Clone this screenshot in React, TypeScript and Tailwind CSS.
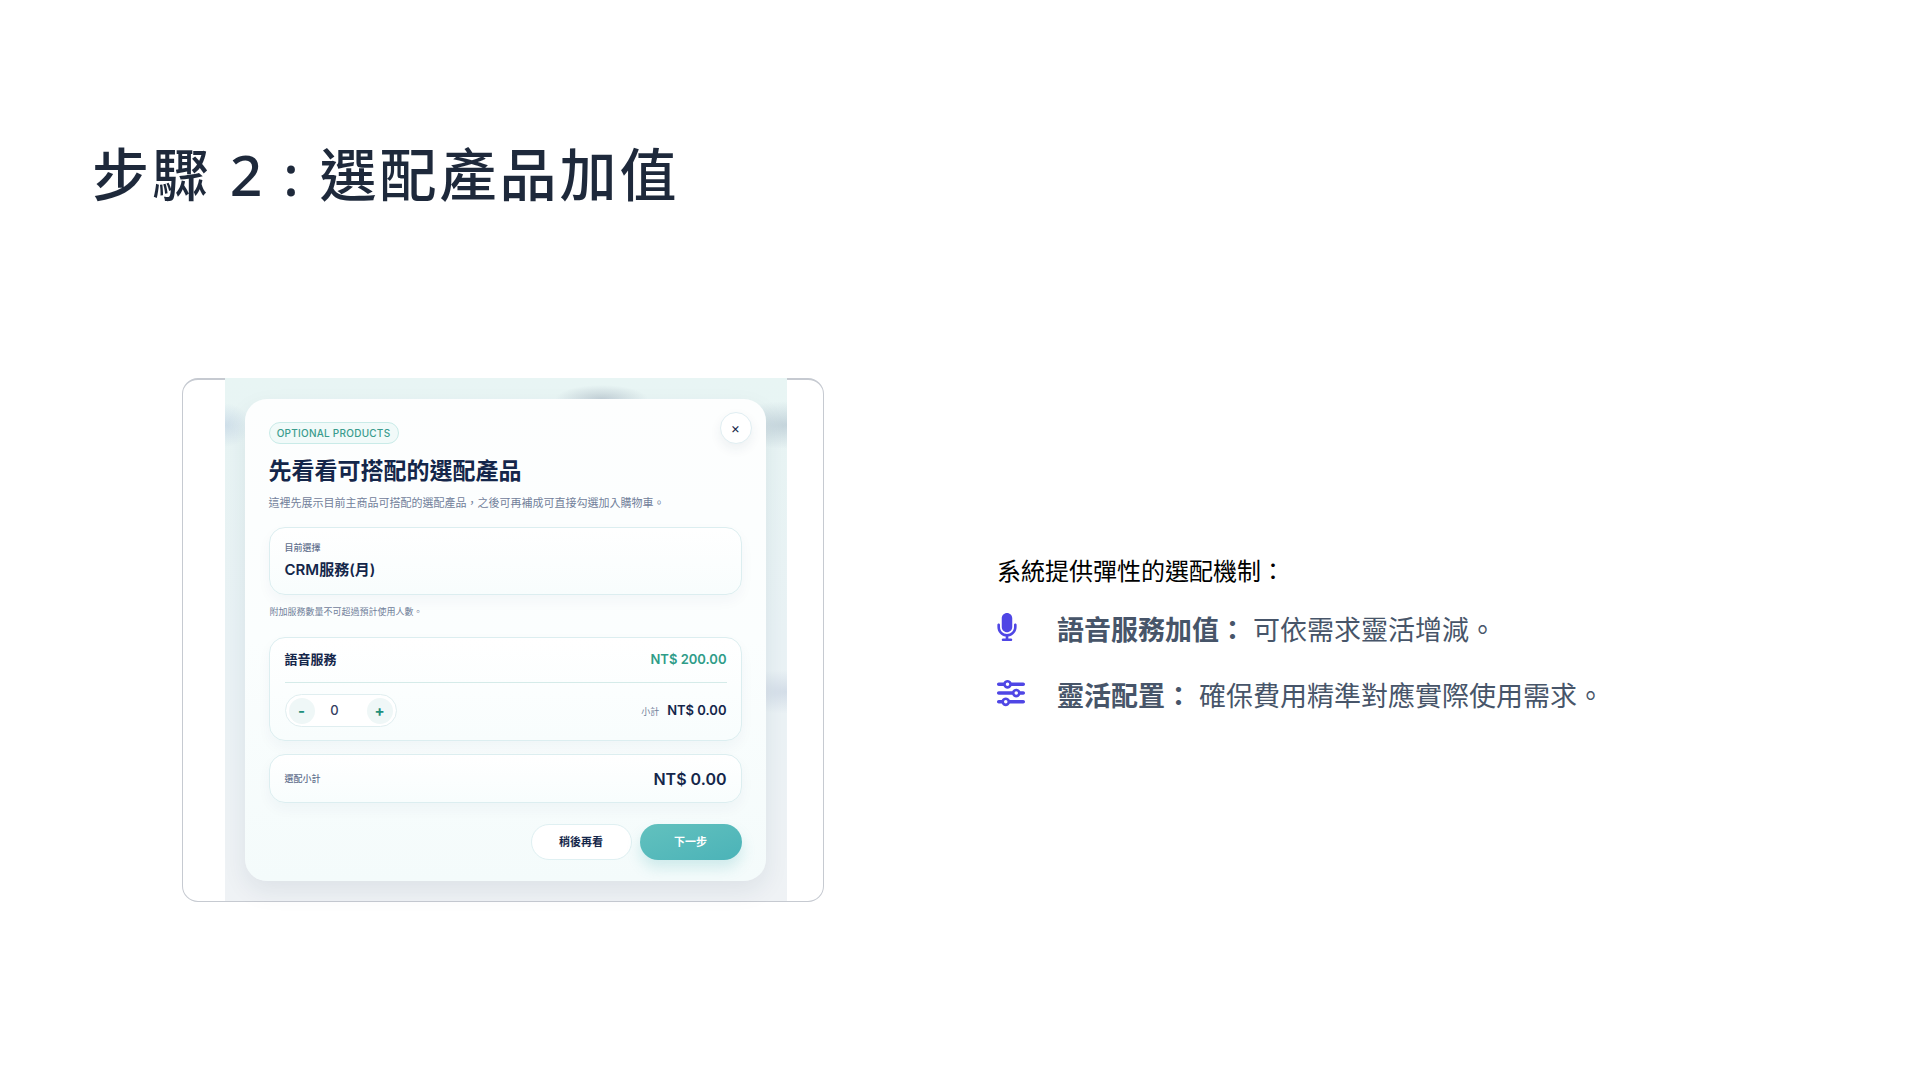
import { useState } from "react";
import type { ReactNode } from "react";
import { FaMicrophone, FaSliders } from "react-icons/fa6";

const sans = "font-['Noto_Sans','Noto_Sans_CJK_TC',sans-serif]";
const ui = "font-['Inter','Noto_Sans_CJK_TC',sans-serif]";

function Card({ className, children }: { className: string; children: ReactNode }) {
  return (
    <section
      className={`rounded-2xl border border-[#dceef0] bg-linear-to-b from-white to-[#f8fdfd] pr-[14px] pl-[15px] shadow-[0_6px_14px_rgba(30,60,90,0.04)] ${className}`}
    >
      {children}
    </section>
  );
}

function Stepper({ value, onChange }: { value: number; onChange: (n: number) => void }) {
  const round = "size-[26px] rounded-full bg-[#eff7f7] text-[15px] leading-[26px] font-bold text-[#1f8f7c]";
  return (
    <div className="flex h-[33px] w-[112px] items-center justify-between rounded-full border border-[#e0eef0] bg-white px-[3px]">
      <button type="button" aria-label="減少" className={round} onClick={() => onChange(Math.max(0, value - 1))}>
        -
      </button>
      <output className="pr-3 text-[13px] font-medium text-[#34405f]">{value}</output>
      <button type="button" aria-label="增加" className={round} onClick={() => onChange(value + 1)}>
        +
      </button>
    </div>
  );
}

function OptionsDialog() {
  const [qty, setQty] = useState(0);
  const subtotal = `NT$ ${(qty * 200).toFixed(2)}`;

  return (
    <div
      className={`${ui} relative rounded-[22px] bg-linear-to-b from-[#fdfefe] via-[#fbfefe] to-[#f4fbfb] px-6 pt-[23px] pb-[21px] text-[#14264a] shadow-[0_10px_24px_rgba(30,50,80,0.08)]`}
    >
      <button
        type="button"
        aria-label="關閉"
        className="absolute top-[13px] right-[14px] size-8 rounded-full border border-[#e0eef2] bg-white text-[14px] leading-[30px] font-normal shadow-[0_5px_12px_rgba(30,50,80,0.07)]"
      >
        ×
      </button>

      <span className="flex h-[22px] w-[130px] items-center justify-center rounded-full border border-[#c9ebe8] bg-[#f1faf9] text-[10px] font-medium tracking-wide text-[#3a9c8d]">
        OPTIONAL PRODUCTS
      </span>
      <h2 className="mt-[10px] text-[23px] leading-[34px] font-bold">先看看可搭配的選配產品</h2>
      <p className="mt-[7px] text-[11px] leading-4 text-[#71809a]">
        這裡先展示目前主商品可搭配的選配產品，之後可再補成可直接勾選加入購物車。
      </p>

      <Card className="mt-4 pt-3 pb-3">
        <p className="text-[9px] leading-[15px] font-medium text-[#5f6f8c]">目前選擇</p>
        <p className="mt-[3px] text-[15px] leading-6 font-semibold">CRM服務(月)</p>
      </Card>
      <p className="mt-[9px] pl-px text-[9px] leading-[15px] text-[#71809a]">附加服務數量不可超過預計使用人數。</p>

      <Card className="mt-[18px] pb-[13px]">
        <div className="flex h-[45px] items-center justify-between border-b border-[#d5ebe9]">
          <h3 className="text-[13px] font-bold">語音服務</h3>
          <span className="text-[13px] font-semibold text-[#2f9c88]">NT$ 200.00</span>
        </div>
        <div className="mt-[11px] flex items-center justify-between">
          <Stepper value={qty} onChange={setQty} />
          <p className="flex items-baseline gap-2">
            <span className="text-[9px] text-[#71809a]">小計</span>
            <span className="text-[13px] font-semibold">{subtotal}</span>
          </p>
        </div>
      </Card>

      <Card className="mt-[13px] flex h-[49px] items-center justify-between">
        <span className="text-[9px] font-medium text-[#5f6f8c]">選配小計</span>
        <span className="text-[16px] font-semibold">{subtotal}</span>
      </Card>

      <div className="mt-[21px] flex justify-end gap-2">
        <button type="button" className="h-9 w-[101px] rounded-full border border-[#dff0f2] bg-white text-[11px] font-bold">
          稍後再看
        </button>
        <button
          type="button"
          className="h-9 w-[102px] rounded-full bg-linear-to-br from-[#62c1be] to-[#4bb3b8] text-[11px] font-bold text-white shadow-[0_8px_14px_rgba(75,179,184,0.22)]"
        >
          下一步
        </button>
      </div>
    </div>
  );
}

function Feature({ icon, title, children }: { icon: ReactNode; title: string; children: ReactNode }) {
  return (
    <li className="flex items-start text-[27px] leading-[42px] text-[#475569]">
      <span className="w-[60px] shrink-0 pt-1 text-[28px] text-[#4f46e5]">{icon}</span>
      <p>
        <strong className="font-bold">{title}</strong> {children}
      </p>
    </li>
  );
}

// soft shapes of the shop page that show through behind the dialog
const backdrop =
  "bg-[radial-gradient(46px_14px_at_67%_4%,rgba(150,165,180,0.45),transparent),radial-gradient(60px_24px_at_100%_9%,rgba(160,180,195,0.5),transparent),radial-gradient(26px_22px_at_0%_9%,rgba(180,200,222,0.5),transparent),radial-gradient(60px_22px_at_100%_60%,rgba(190,202,220,0.5),transparent),linear-gradient(to_bottom,#e8f5f4,#e9f2f5_50%,#eff2f5)]";

export default function App() {
  return (
    <main className={`${sans} min-h-screen bg-white px-[92px] pt-[130px] pb-16`} lang="zh-Hant">
      <h1 className="text-[57px] leading-[88px] font-medium tracking-[3px] text-[#1e293b]">步驟 2 : 選配產品加值</h1>

      <div className="mt-[160px] grid grid-cols-2 items-center gap-[74px]">
        <div className="flex justify-center pr-[10px]">
          <figure className="w-full max-w-[642px] rounded-2xl border border-t-2 border-[#c6cad1] pr-9 pl-[42px]">
            <div className={`-mt-0.5 pt-[21px] pr-[21px] pb-5 pl-5 ${backdrop}`}>
              <OptionsDialog />
            </div>
          </figure>
        </div>

        <div className="pb-[10px]">
          <p className="text-[24px] leading-9 text-black">系統提供彈性的選配機制：</p>
          <ul className="mt-5 flex flex-col gap-6">
            <Feature icon={<FaMicrophone className="-ml-1" />} title="語音服務加值：">
              可依需求靈活增減。
            </Feature>
            <Feature icon={<FaSliders />} title="靈活配置：">
              確保費用精準對應實際使用需求。
            </Feature>
          </ul>
        </div>
      </div>
    </main>
  );
}
